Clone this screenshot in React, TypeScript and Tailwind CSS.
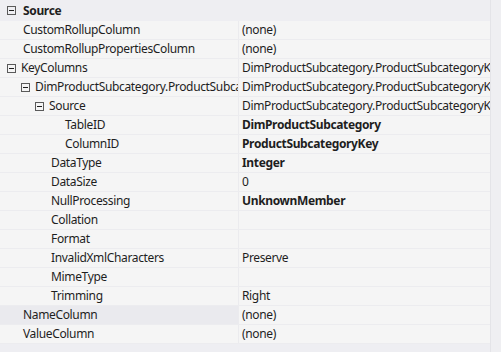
import React from "react";

type Row = {
  name: string;
  value?: string;
  level: number;
  toggle?: boolean;
  bold?: boolean;
  selected?: boolean;
};

const rows: Row[] = [
  { name: "CustomRollupColumn", value: "(none)", level: 0 },
  { name: "CustomRollupPropertiesColumn", value: "(none)", level: 0 },
  { name: "KeyColumns", value: "DimProductSubcategory.ProductSubcategoryKey", level: 0, toggle: true },
  { name: "DimProductSubcategory.ProductSubcategoryKey", value: "DimProductSubcategory.ProductSubcategoryKey", level: 1, toggle: true },
  { name: "Source", value: "DimProductSubcategory.ProductSubcategoryKey", level: 2, toggle: true },
  { name: "TableID", value: "DimProductSubcategory", level: 3, bold: true },
  { name: "ColumnID", value: "ProductSubcategoryKey", level: 3, bold: true },
  { name: "DataType", value: "Integer", level: 2, bold: true },
  { name: "DataSize", value: "0", level: 2 },
  { name: "NullProcessing", value: "UnknownMember", level: 2, bold: true },
  { name: "Collation", level: 2 },
  { name: "Format", level: 2 },
  { name: "InvalidXmlCharacters", value: "Preserve", level: 2 },
  { name: "MimeType", level: 2 },
  { name: "Trimming", value: "Right", level: 2 },
  { name: "NameColumn", value: "(none)", level: 0, selected: true },
  { name: "ValueColumn", value: "(none)", level: 0 },
];

const indent = ["pl-[7px]", "pl-[21px]", "pl-[35px]", "pl-[49px]"];

const Minus = () => (
  <svg width="9" height="9" viewBox="0 0 9 9" className="shrink-0">
    <rect x="0.5" y="0.5" width="8" height="8" fill="none" stroke="#5a5a5a" />
    <line x1="2" y1="4.5" x2="7" y2="4.5" stroke="#1e1e1e" />
  </svg>
);

export default function App() {
  return (
    <div
      className="w-[501px] h-[352px] bg-[#eeeef2] text-[#1e1e1e] text-[12px] tracking-[-0.35px] overflow-hidden flex"
      style={{ fontFamily: '"Noto Sans", "Open Sans", sans-serif' }}
    >
      <div className="w-[490px] flex flex-col">
        <div className="h-[21px] flex items-center pl-[7px] gap-[7px]">
          <Minus />
          <span className="font-bold">Source</span>
        </div>
        {rows.map((r, i) => (
          <div key={i} className="h-[19px] flex border-b border-[#ececef]">
            <div
              className={`w-[238px] shrink-0 flex items-center gap-[5px] whitespace-nowrap overflow-hidden ${indent[r.level]} ${
                r.selected ? "bg-[#eaeaee]" : "bg-[#f5f5f5]"
              }`}
            >
              {r.toggle ? <Minus /> : <span className="w-[11px] shrink-0" />}
              <span>{r.name}</span>
            </div>
            <div className="flex-1 min-w-0 bg-[#f5f5f5] border-l border-[#ebebee] pl-[3px] flex items-center whitespace-nowrap overflow-hidden">
              <span className={r.bold ? "font-bold" : ""}>{r.value}</span>
            </div>
          </div>
        ))}
      </div>
      <div className="flex-1 bg-[#efeff2] border-l border-[#e4e4e8]" />
    </div>
  );
}
